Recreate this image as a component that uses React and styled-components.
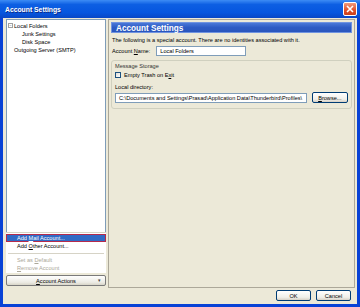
import React from "react";
import styled, { createGlobalStyle } from "styled-components";

const GlobalStyle = createGlobalStyle`
  html, body {
    margin: 0;
    padding: 0;
    background: #0842d6;
  }
  body {
    font-family: "Liberation Sans", Tahoma, Arial, sans-serif;
    font-size: 5.6px;
    color: #000;
  }
  * { box-sizing: border-box; }
`;

const treeItems = [
  { label: "Local Folders", level: 0, toggle: true },
  { label: "Junk Settings", level: 1 },
  { label: "Disk Space", level: 1 },
  { label: "Outgoing Server (SMTP)", level: 0 },
];

export default function App() {
  return (
    <>
      <GlobalStyle />
      <Window>
        <TitleBar>
          <TitleText>Account Settings</TitleText>
          <CloseButton>
            <svg width="8" height="8" viewBox="0 0 8 8">
              <path d="M1 1 L7 7 M7 1 L1 7" stroke="#fff" strokeWidth="1.6" />
            </svg>
          </CloseButton>
        </TitleBar>
        <Body>
          <Main>
            <LeftColumn>
              <Tree>
                {treeItems.map((item) => (
                  <TreeRow key={item.label} level={item.level}>
                    {item.toggle && <Toggle>−</Toggle>}
                    {item.label}
                  </TreeRow>
                ))}
                <Menu>
                  <MenuItem active>
                    Add <u>M</u>ail Account...
                  </MenuItem>
                  <MenuItem>
                    Add <u>O</u>ther Account...
                  </MenuItem>
                  <MenuSeparator />
                  <MenuItem disabled>
                    Set as <u>D</u>efault
                  </MenuItem>
                  <MenuItem disabled>
                    <u>R</u>emove Account
                  </MenuItem>
                </Menu>
              </Tree>
              <ActionsButton>
                <span>
                  <u>A</u>ccount Actions
                </span>
                <Arrow>▾</Arrow>
              </ActionsButton>
            </LeftColumn>
            <Panel>
              <PanelHeader>Account Settings</PanelHeader>
              <Note>
                The following is a special account. There are no identities
                associated with it.
              </Note>
              <NameRow>
                <span>
                  Account <u>N</u>ame:
                </span>
                <TextField width="90px">Local Folders</TextField>
              </NameRow>
              <GroupBox>
                <GroupLabel>Message Storage</GroupLabel>
                <CheckRow>
                  <CheckBox />
                  <span>
                    Empty Trash on E<u>x</u>it
                  </span>
                </CheckRow>
                <FieldLabel>Local directory:</FieldLabel>
                <DirRow>
                  <TextField width="195px">
                    C:\Documents and Settings\Prasad\Application
                    Data\Thunderbird\Profiles\
                  </TextField>
                  <Button width="37px">
                    <u>B</u>rowse...
                  </Button>
                </DirRow>
              </GroupBox>
            </Panel>
          </Main>
          <Footer>
            <Button width="35px">OK</Button>
            <Button width="35px">Cancel</Button>
          </Footer>
        </Body>
      </Window>
    </>
  );
}

const Window = styled.div`
  width: 360px;
  height: 307px;
  display: flex;
  flex-direction: column;
  background: #0842d6;
  padding: 0 3px 3px;
`;

const TitleBar = styled.div`
  height: 18px;
  margin: 0 -3px;
  padding: 0 3px 0 5px;
  display: flex;
  align-items: center;
  justify-content: space-between;
  background: linear-gradient(#3d8cf5 0%, #0d5fe3 25%, #0656df 70%, #0847c6 100%);
`;

const TitleText = styled.div`
  color: #fff;
  font-weight: bold;
  font-size: 6.8px;
  text-shadow: 1px 1px 0 #0a2a88;
`;

const CloseButton = styled.div`
  width: 14px;
  height: 14px;
  display: flex;
  align-items: center;
  justify-content: center;
  border: 1px solid #fff;
  border-radius: 2px;
  background: linear-gradient(#f09a7c, #e0502a 60%, #c8401c);
`;

const Body = styled.div`
  flex: 1;
  display: flex;
  flex-direction: column;
  background: #ece9d8;
  padding: 1px 2px 3px 3px;
`;

const Main = styled.div`
  flex: 1;
  display: flex;
  gap: 2px;
  min-height: 0;
`;

const LeftColumn = styled.div`
  width: 100px;
  flex-shrink: 0;
  display: flex;
  flex-direction: column;
  gap: 2px;
  padding-bottom: 2px;
`;

const Tree = styled.div`
  position: relative;
  flex: 1;
  background: #fff;
  border: 1px solid #7f9db9;
  padding: 2px 0 0 1px;
`;

const TreeRow = styled.div`
  height: 8px;
  line-height: 8px;
  padding-left: ${({ level }) => (level ? 14 : 6)}px;
  position: relative;
  white-space: nowrap;
`;

const Toggle = styled.span`
  position: absolute;
  left: 0;
  top: 1px;
  width: 5px;
  height: 5px;
  border: 1px solid #a0a0a0;
  font-size: 4px;
  line-height: 3px;
  text-align: center;
  color: #333;
`;

const Menu = styled.div`
  position: absolute;
  left: -1px;
  right: -1px;
  bottom: -1px;
  background: #fff;
  border-top: 1px solid #d6d3c6;
  padding: 1px 0 1px;
`;

const MenuItem = styled.div`
  height: 8px;
  line-height: 7px;
  padding-left: 10px;
  white-space: nowrap;
  color: ${({ disabled, active }) =>
    disabled ? "#aca899" : active ? "#fff" : "#000"};
  background: ${({ active }) => (active ? "#316ac5" : "transparent")};
  border: 1px solid ${({ active }) => (active ? "#b42a4c" : "transparent")};
`;

const MenuSeparator = styled.div`
  height: 1px;
  margin: 3px 2px 2px;
  background: #d6d3c6;
`;

const ActionsButton = styled.div`
  height: 11px;
  display: flex;
  align-items: center;
  justify-content: center;
  position: relative;
  border: 1px solid #7a7a7a;
  border-radius: 2px;
  background: linear-gradient(#fefefe, #ecebe4 70%, #d8d5c8);
`;

const Arrow = styled.span`
  position: absolute;
  right: 4px;
  top: 0;
  font-size: 5px;
  line-height: 9px;
  color: #444;
`;

const Panel = styled.div`
  flex: 1;
  min-width: 0;
  display: flex;
  flex-direction: column;
  border: 1px solid #aca899;
  padding: 2px 2px 1px;
`;

const PanelHeader = styled.div`
  height: 11px;
  line-height: 11px;
  padding-left: 4px;
  color: #fff;
  font-weight: bold;
  font-size: 8.2px;
  background: linear-gradient(#4a78d8, #2d5bc4 50%, #2a56bd);
  border: 1px solid #6f93e0;
`;

const Note = styled.div`
  margin-top: 4px;
  padding-left: 1px;
  white-space: nowrap;
`;

const NameRow = styled.div`
  display: flex;
  align-items: center;
  gap: 6px;
  margin-top: 3px;
  padding-left: 1px;
`;

const TextField = styled.div`
  width: ${({ width }) => width};
  height: 10px;
  line-height: 8px;
  padding-left: 3px;
  border: 1px solid #7f9db9;
  background: #fff;
  white-space: nowrap;
  overflow: hidden;
`;

const GroupBox = styled.div`
  margin-top: 4px;
  border: 1px solid #d0d0bf;
  border-radius: 3px;
  padding: 2px 3px 5px;
  display: flex;
  flex-direction: column;
`;

const GroupLabel = styled.div`
  color: #333;
  line-height: 7px;
`;

const CheckRow = styled.div`
  display: flex;
  align-items: center;
  gap: 3px;
  margin-top: 2px;
`;

const CheckBox = styled.div`
  width: 6px;
  height: 6px;
  border: 1px solid #1c5180;
  background: linear-gradient(135deg, #dcdcd6, #fff);
`;

const FieldLabel = styled.div`
  margin-top: 6px;
  line-height: 7px;
`;

const DirRow = styled.div`
  display: flex;
  align-items: center;
  gap: 5px;
  margin-top: 1px;
`;

const Button = styled.div`
  width: ${({ width }) => width};
  height: 11px;
  display: flex;
  align-items: center;
  justify-content: center;
  border: 1px solid #003c74;
  border-radius: 2px;
  background: linear-gradient(#ffffff, #f0efe9 70%, #d6d0c5);
`;

const Footer = styled.div`
  display: flex;
  justify-content: flex-end;
  gap: 5px;
  padding: 2px 4px 0 0;
`;
